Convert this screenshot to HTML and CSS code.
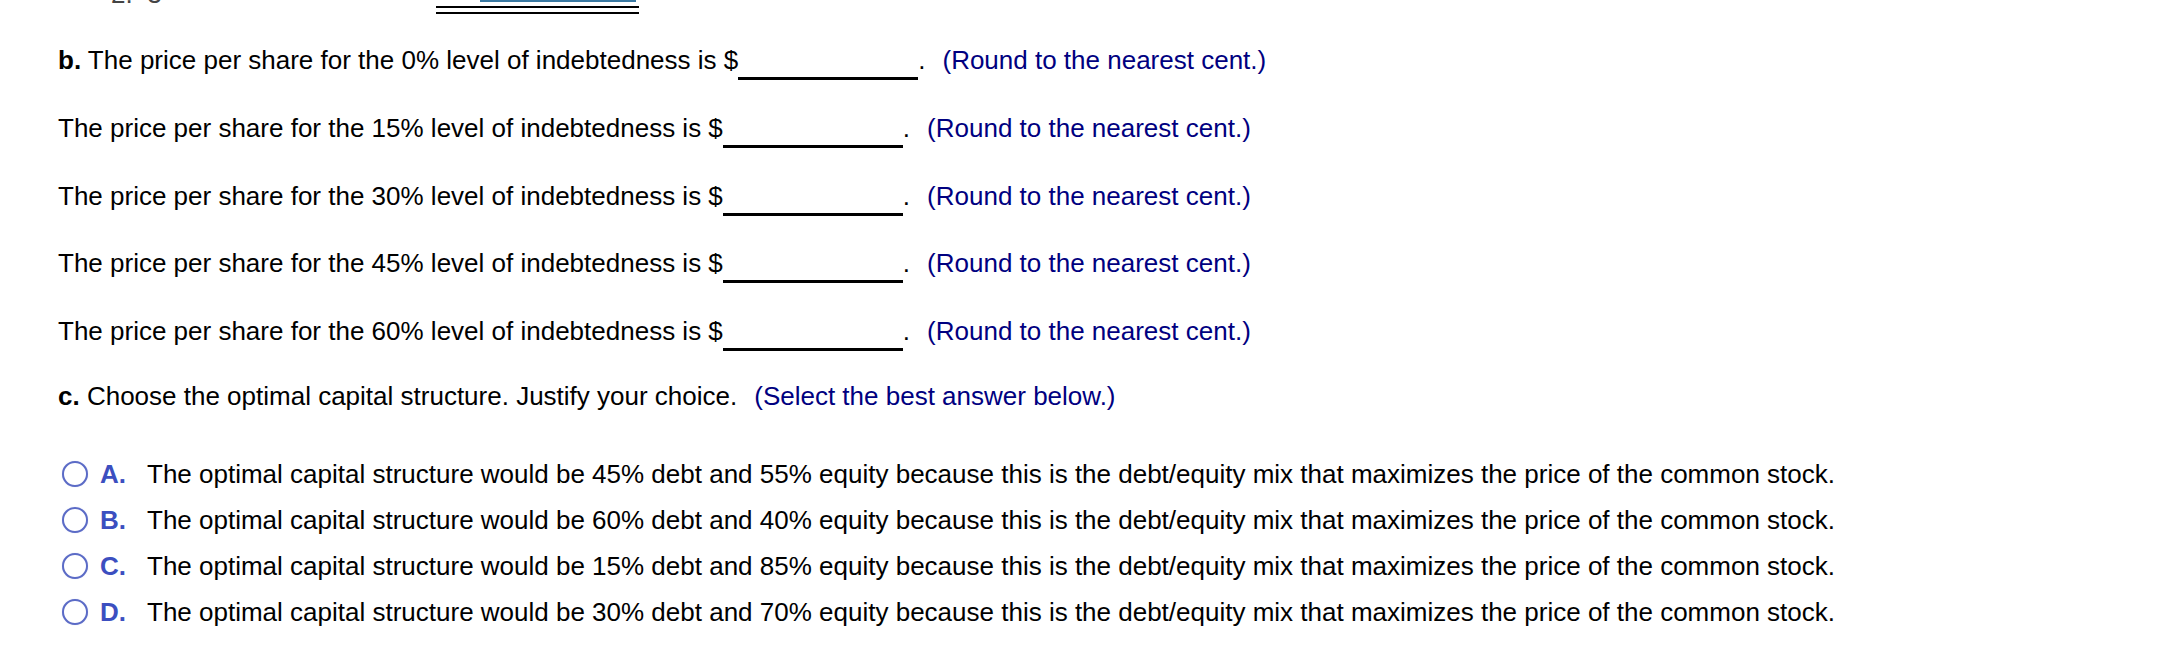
FILE: index.html
```html
<!DOCTYPE html>
<html>
<head>
<meta charset="utf-8">
<link rel="stylesheet" href="styles.css">
</head>
<body>
<div class="page">
  <div class="top">
    <div class="frag"><div class="frag-text">2.&nbsp;&nbsp;3</div></div>
    <div class="cell">
      <div class="bar"></div>
      <div class="rule"></div>
    </div>
  </div>

  <div class="rows">
    <div class="row"><b>b.</b> The price per share for the 0% level of indebtedness is $<span class="blank"></span>.<span class="note">(Round to the nearest cent.)</span></div>
    <div class="row">The price per share for the 15% level of indebtedness is $<span class="blank"></span>.<span class="note">(Round to the nearest cent.)</span></div>
    <div class="row">The price per share for the 30% level of indebtedness is $<span class="blank"></span>.<span class="note">(Round to the nearest cent.)</span></div>
    <div class="row">The price per share for the 45% level of indebtedness is $<span class="blank"></span>.<span class="note">(Round to the nearest cent.)</span></div>
    <div class="row">The price per share for the 60% level of indebtedness is $<span class="blank"></span>.<span class="note">(Round to the nearest cent.)</span></div>
  </div>

  <div class="question"><b>c.</b> Choose the optimal capital structure. Justify your choice.<span class="note">(Select the best answer below.)</span></div>

  <div class="options">
    <div class="option"><span class="radio"></span><span class="letter">A.</span><span class="otext">The optimal capital structure would be 45% debt and 55% equity because this is the debt/equity mix that maximizes the price of the common stock.</span></div>
    <div class="option"><span class="radio"></span><span class="letter">B.</span><span class="otext">The optimal capital structure would be 60% debt and 40% equity because this is the debt/equity mix that maximizes the price of the common stock.</span></div>
    <div class="option"><span class="radio"></span><span class="letter">C.</span><span class="otext">The optimal capital structure would be 15% debt and 85% equity because this is the debt/equity mix that maximizes the price of the common stock.</span></div>
    <div class="option"><span class="radio"></span><span class="letter">D.</span><span class="otext">The optimal capital structure would be 30% debt and 70% equity because this is the debt/equity mix that maximizes the price of the common stock.</span></div>
  </div>
</div>
</body>
</html>
```

FILE: styles.css
```css
html, body {
  margin: 0;
  padding: 0;
  background: #ffffff;
}

body {
  font-family: "Liberation Sans", Arial, sans-serif;
  font-size: 26px;
  color: #000000;
}

.page {
  padding-left: 58px;
}

.top {
  display: flex;
  height: 14px;
}

.frag {
  margin-left: 53px;
  width: 325px;
  height: 4px;
  overflow: hidden;
}

.frag-text {
  margin-top: -21px;
  line-height: 30px;
  color: #444444;
  white-space: nowrap;
}

.cell {
  width: 203px;
  height: 12px;
  border-bottom: 2px solid #000000;
  display: flex;
  flex-direction: column;
}

.bar {
  height: 2px;
  margin: 0 3px 0 44px;
  background: #3b7aa3;
}

.rule {
  height: 2px;
  margin-top: 4px;
  background: #000000;
}

.rows {
  margin-top: 31px;
  display: flex;
  flex-direction: column;
  gap: 37.75px;
}

.row, .question {
  line-height: 30px;
  height: 30px;
  white-space: nowrap;
}

.blank {
  display: inline-block;
  width: 180px;
  height: 24px;
  border-bottom: 3px solid #000000;
  margin-bottom: -11px;
  vertical-align: baseline;
}

.note {
  color: #000080;
  margin-left: 17px;
}

.question {
  margin-top: 35px;
}

.options {
  margin-top: 48px;
  display: flex;
  flex-direction: column;
  gap: 16px;
}

.option {
  display: flex;
  align-items: center;
  height: 30px;
  line-height: 30px;
  white-space: nowrap;
}

.radio {
  box-sizing: border-box;
  width: 26px;
  height: 26px;
  margin-left: 4px;
  margin-right: 12px;
  border: 2.5px solid #5b6bc6;
  border-radius: 50%;
  background: #ffffff;
  box-shadow: 0 0 1px rgba(91, 107, 198, 0.35);
}

.letter {
  width: 47px;
  font-weight: bold;
  color: #3c4fc0;
}
```
